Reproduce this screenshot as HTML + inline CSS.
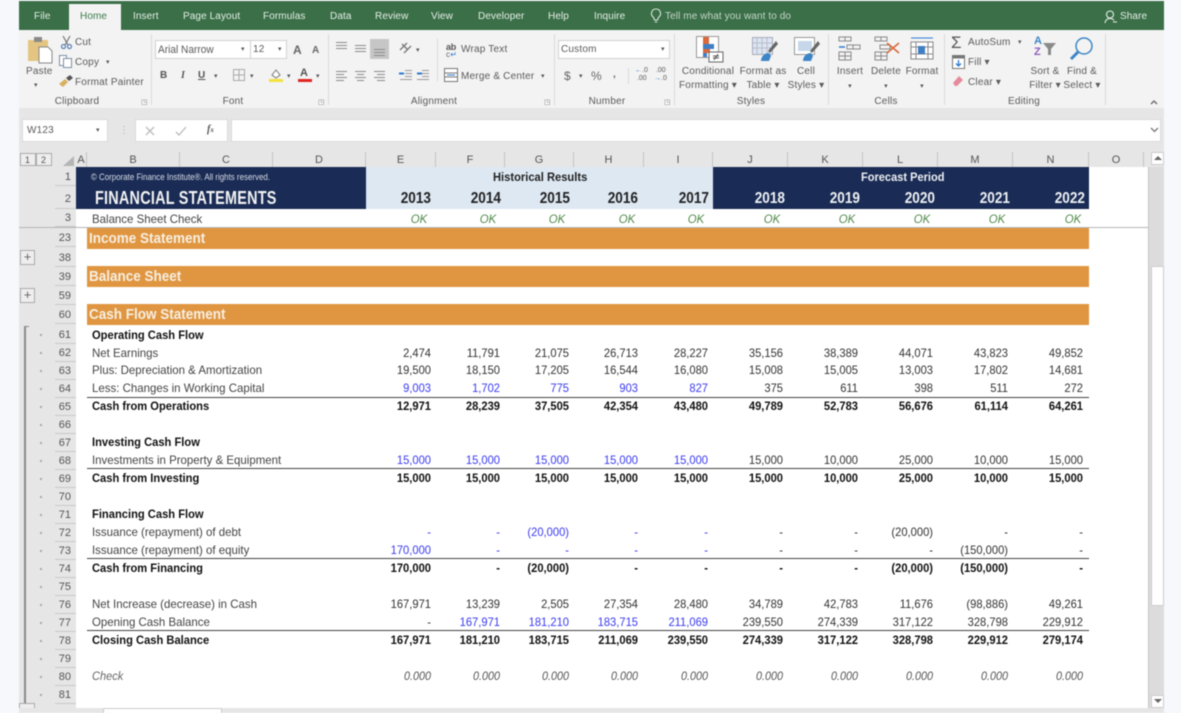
<!DOCTYPE html>
<html><head><meta charset="utf-8"><title>Excel</title>
<style>
*{box-sizing:border-box}
html,body{margin:0;padding:0;width:1181px;height:713px;overflow:hidden;background:#f6f8fb}
#w{position:absolute;left:0;top:0;width:1181px;height:713px;overflow:hidden;filter:blur(.4px);font-family:"Liberation Sans",sans-serif;color:#222}
.a,.t,.g{position:absolute;white-space:nowrap}
.t{font-size:10px;line-height:12px;color:#5a5a5a;letter-spacing:.2px}
.c{text-align:center;transform:translateX(-50%)}
.tab{position:absolute;top:11px;font-size:10px;line-height:12px;color:#e6efe8;white-space:nowrap;letter-spacing:.1px}
.sep{position:absolute;top:34px;width:1px;height:71px;background:#d9d9d9}
.r{position:absolute;left:0;width:1181px;height:18px;line-height:18px;font-size:12px;color:#333}
.r span{position:absolute;top:0;white-space:nowrap;text-align:right;width:80px;transform:scaleX(.93);transform-origin:right center}
.r .l{left:92px;width:280px;text-align:left;color:#444;transform:scaleX(.955);transform-origin:left center}
.b{font-weight:bold;color:#111}.b .l{color:#111;transform:scaleX(.93)}
.i{font-style:italic;color:#555}.i .l{color:#666;transform:scaleX(.92)}.i span{transform:scaleX(.9)}
.u{color:#3a3af0!important}
.E{left:351px}.F{left:420px}.G{left:489px}.H{left:558px}.I{left:628px}.J{left:703px}.K{left:778px}.L{left:853px}.M{left:928px}.N{left:1003px}
.n{position:absolute;left:55px;width:21px;text-align:right;padding-right:5px;font-size:11px;height:18px;line-height:18px;background:#e6e6e6;border-bottom:1px solid #c9c9c9;color:#555}
.d{position:absolute;left:40px;width:2px;height:2px;background:#aaa}
.h{position:absolute;top:152px;height:15px;line-height:16px;font-size:11px;text-align:center;color:#555;border-right:1px solid #c4c4c4}
.o{position:absolute;left:87px;width:1002px;height:21px;background:#e09640;color:#f7efe2;font-weight:bold;font-size:15px;line-height:21px;padding-left:2px}
.o span{display:inline-block;transform:scaleX(.9);transform-origin:left center;white-space:nowrap}
.y{position:absolute;top:189px;height:20px;line-height:20px;font-size:16px;font-weight:bold;text-align:right;width:80px;transform:scaleX(.85);transform-origin:right center}
.y.F,.y.G,.y.I{margin-left:1px}.y.J,.y.K,.y.L,.y.M,.y.N{margin-left:2px}
.ok{position:absolute;top:210px;font-size:12px;line-height:18px;font-style:italic;color:#4f8a4a;width:60px;text-align:center;transform:scaleX(.95)}
.ln{position:absolute;left:87px;width:1002px;height:1px;background:#444}
svg{position:absolute;overflow:visible}
</style></head><body><div id="w">

<!-- chrome -->
<div class="a" style="left:19px;top:1px;width:1145px;height:29px;background:#3a6f47"></div>
<div class="a" style="left:19px;top:30px;width:1145px;height:78px;background:#f3f3f3"></div>
<div class="a" style="left:19px;top:108px;width:1145px;height:44px;background:#e6e6e6"></div>
<div class="a" style="left:69px;top:4px;width:52px;height:27px;background:#f3f3f3"></div>
<div class="tab" style="left:34px">File</div>
<div class="tab" style="left:80px;color:#3a7a4c">Home</div>
<div class="tab" style="left:133px">Insert</div>
<div class="tab" style="left:183px">Page Layout</div>
<div class="tab" style="left:263px">Formulas</div>
<div class="tab" style="left:330px">Data</div>
<div class="tab" style="left:375px">Review</div>
<div class="tab" style="left:431px">View</div>
<div class="tab" style="left:478px">Developer</div>
<div class="tab" style="left:548px">Help</div>
<div class="tab" style="left:594px">Inquire</div>
<svg style="left:650px;top:8px" width="12" height="16" viewBox="0 0 12 16" fill="none" stroke="#dfe9e2" stroke-width="1.1"><path d="M6 1a4.5 4.5 0 0 0-2.6 8.2L4.500 12h3l1.100-2.800A4.500 4.500 0 0 0 6 1zM4.800 14h2.400"/></svg>
<div class="tab" style="left:665px;color:#c6d6ca">Tell me what you want to do</div>
<svg style="left:1104px;top:10px" width="13" height="14" viewBox="0 0 13 14" fill="none" stroke="#e6efe8" stroke-width="1.1"><circle cx="6" cy="4.500" r="3.500"/><path d="M1 13c.5-3 2.500-4.500 5-4.500s3.500 1 4 2M9 12h4"/></svg>
<div class="tab" style="left:1120px">Share</div>

<!-- ribbon separators -->
<div class="sep" style="left:151px"></div><div class="sep" style="left:328px"></div><div class="sep" style="left:554px"></div><div class="sep" style="left:674px"></div><div class="sep" style="left:828px"></div><div class="sep" style="left:944px"></div><div class="sep" style="left:1105px"></div>

<!-- clipboard -->
<svg style="left:27px;top:36px" width="26" height="28" viewBox="0 0 26 28"><rect x="1" y="4" width="20" height="21" fill="#e3c480"/><rect x="7" y="1" width="8" height="5" fill="#8a8a8a"/><path d="M12 11h9l4 4v12H12z" fill="#fff" stroke="#888"/></svg>
<div class="t" style="left:26px;top:66px">Paste</div>
<div class="t" style="left:34px;top:80px;font-size:7px">▾</div>
<svg style="left:60px;top:36px" width="13" height="13" viewBox="0 0 13 13" fill="none" stroke="#5a7fb0" stroke-width="1.2"><path d="M3 0l5 9M10 0L5 9" stroke="#777"/><circle cx="3.500" cy="10.500" r="2"/><circle cx="9.500" cy="10.500" r="2"/></svg>
<div class="t" style="left:75px;top:37px">Cut</div>
<svg style="left:59px;top:55px" width="13" height="13" viewBox="0 0 13 13" fill="#fff" stroke="#7a8fa8"><rect x=".5" y=".5" width="7" height="10"/><rect x="4.500" y="3.500" width="8" height="9"/></svg>
<div class="t" style="left:75px;top:57px">Copy</div>
<div class="t" style="left:106px;top:57px;font-size:7px">▾</div>
<svg style="left:59px;top:75px" width="14" height="12" viewBox="0 0 14 12"><path d="M0 9l6-5 3 3-5 5z" fill="#d8b060"/><path d="M7 3l4-3 3 3-4 3z" fill="#555"/></svg>
<div class="t" style="left:75px;top:77px">Format Painter</div>
<div class="t c" style="left:77px;top:96px">Clipboard</div>
<div class="t" style="left:141px;top:97px;font-size:7px;color:#888">◳</div>

<!-- font -->
<div class="a" style="left:155px;top:40px;width:96px;height:19px;background:#fff;border:1px solid #d0d0d0"></div>
<div class="t" style="left:158px;top:44px;letter-spacing:0;font-size:11px;transform:scaleX(.92);transform-origin:left">Arial Narrow</div>
<div class="t" style="left:241px;top:44px;font-size:7px">▾</div>
<div class="a" style="left:250px;top:40px;width:37px;height:19px;background:#fff;border:1px solid #d0d0d0"></div>
<div class="t" style="left:253px;top:44px">12</div>
<div class="t" style="left:278px;top:44px;font-size:7px">▾</div>
<div class="t" style="left:293px;top:43px;font-size:12px;line-height:14px;font-weight:bold;color:#666">A</div>
<div class="t" style="left:312px;top:45px;font-size:10px;font-weight:bold;color:#666">A</div>
<div class="t" style="left:160px;top:70px;font-weight:bold;color:#555">B</div>
<div class="t" style="left:181px;top:70px;font-style:italic;font-family:'Liberation Serif',serif;font-weight:bold;color:#555">I</div>
<div class="t" style="left:198px;top:70px;font-weight:bold;color:#555;text-decoration:underline">U</div>
<div class="t" style="left:214px;top:71px;font-size:7px">▾</div>
<svg style="left:233px;top:69px" width="12" height="12" viewBox="0 0 12 12" fill="none" stroke="#aaa"><path d="M.5.5h11v11H.5zM6 .5v11M.5 6h11"/></svg>
<div class="t" style="left:250px;top:71px;font-size:7px">▾</div>
<svg style="left:269px;top:68px" width="15" height="15" viewBox="0 0 15 15"><path d="M3 7l4-5 4 5-4 3z" fill="#fff" stroke="#777"/><rect y="11" width="14" height="3" fill="#f4e23e"/></svg>
<div class="t" style="left:287px;top:71px;font-size:7px">▾</div>
<div class="t" style="left:300px;top:67px;font-size:11px;font-weight:bold;color:#555">A</div>
<div class="a" style="left:298px;top:79px;width:14px;height:3px;background:#e02525"></div>
<div class="t" style="left:316px;top:71px;font-size:7px">▾</div>
<div class="t c" style="left:233px;top:96px">Font</div>
<div class="t" style="left:318px;top:97px;font-size:7px;color:#888">◳</div>

<!-- alignment -->
<div class="a" style="left:370px;top:39px;width:19px;height:20px;background:#c6c6c6"></div>
<svg style="left:335px;top:41px" width="52" height="14" viewBox="0 0 52 14" stroke="#8a8a8a" fill="none"><path d="M1 1.500h11M1 4.500h11M1 7.500h11M20 4.500h11M20 7.500h11M20 10.500h11M39 8.500h11M39 11.500h11M39 14.500h11"/></svg>
<svg style="left:335px;top:70px" width="52" height="12" viewBox="0 0 52 12" stroke="#8a8a8a" fill="none"><path d="M1 1.500h11M1 4.500h8M1 7.500h11M1 10.500h8M20 1.500h11M22 4.500h7M20 7.500h11M22 10.500h7M39 1.500h11M42 4.500h8M39 7.500h11M42 10.500h8"/></svg>
<svg style="left:399px;top:41px" width="13" height="14" viewBox="0 0 13 14" fill="none" stroke="#777" stroke-width="1.300"><path d="M1 9l7-7M3 3l6 6M5 12l7-7"/></svg>
<div class="t" style="left:416px;top:45px;font-size:7px">▾</div>
<svg style="left:399px;top:69px" width="33" height="12" viewBox="0 0 33 12" fill="none" stroke="#999"><path d="M6 1.500h7M6 4.500h7M6 7.500h7M1 10.500h12M23 1.500h7M23 4.500h7M23 7.500h7M18 10.500h12"/><path d="M0 4.500h5M18 4.500h5" stroke="#2d7ad0" stroke-width="2"/></svg>
<div class="a" style="left:437px;top:39px;width:1px;height:42px;background:#d9d9d9"></div>
<div class="t" style="left:446px;top:42px;font-size:9px;line-height:10px;font-weight:bold;color:#555;letter-spacing:-.3px">ab</div>
<div class="t" style="left:446px;top:50px;font-size:8px;line-height:10px;color:#666">c<span style="color:#2d7ad0">↵</span></div>
<div class="t" style="left:461px;top:44px">Wrap Text</div>
<svg style="left:444px;top:68px" width="14" height="14" viewBox="0 0 14 14" fill="#fff" stroke="#777"><rect x=".5" y=".5" width="13" height="13"/><path d="M.5 5h13M.5 9h13" /><path d="M3 7h8" stroke="#2d7ad0"/></svg>
<div class="t" style="left:461px;top:71px">Merge &amp; Center</div>
<div class="t" style="left:541px;top:71px;font-size:7px">▾</div>
<div class="t c" style="left:434px;top:96px">Alignment</div>
<div class="t" style="left:544px;top:97px;font-size:7px;color:#888">◳</div>

<!-- number -->
<div class="a" style="left:558px;top:40px;width:112px;height:19px;background:#fff;border:1px solid #d0d0d0"></div>
<div class="t" style="left:561px;top:44px">Custom</div>
<div class="t" style="left:661px;top:44px;font-size:7px">▾</div>
<div class="t" style="left:564px;top:69px;font-size:12px;line-height:14px;color:#666">$</div>
<div class="t" style="left:579px;top:71px;font-size:7px">▾</div>
<div class="t" style="left:591px;top:69px;font-size:12px;line-height:14px;color:#666">%</div>
<div class="t" style="left:613px;top:69px;font-weight:bold;color:#666">,</div>
<div class="a" style="left:628px;top:68px;width:1px;height:16px;background:#d9d9d9"></div>
<div class="t" style="left:635px;top:67px;font-size:7px;line-height:8px;letter-spacing:0"><span style="color:#2d7ad0">←</span>.0<br>&nbsp;.00</div>
<div class="t" style="left:654px;top:67px;font-size:7px;line-height:8px;letter-spacing:0">&nbsp;.00<br><span style="color:#2d7ad0">→</span>.0</div>
<div class="t c" style="left:607px;top:96px">Number</div>
<div class="t" style="left:664px;top:97px;font-size:7px;color:#888">◳</div>

<!-- styles -->
<svg style="left:696px;top:36px" width="28" height="27" viewBox="0 0 28 27"><rect x=".5" y=".5" width="22" height="21" fill="#fff" stroke="#999"/><rect x="7" y="1" width="6" height="7" fill="#d9693a"/><rect x="7" y="8" width="11" height="5" fill="#3f7fc6"/><rect x="7" y="13" width="7" height="4" fill="#d9693a"/><rect x="7" y="17" width="4" height="4" fill="#3f7fc6"/><rect x="13" y="16" width="14" height="10" fill="#fff" stroke="#666"/><path d="M17 20h6M17 22h6M22 18l-4 6" stroke="#555" fill="none"/></svg>
<svg style="left:752px;top:37px" width="26" height="26" viewBox="0 0 26 26"><rect x=".5" y=".5" width="20" height="17" fill="#dce6f2" stroke="#aab"/><path d="M5 1v16M10 1v16M15 1v16M1 6h19M1 11h19" stroke="#bbc" fill="none"/><path d="M24 4l-8 10 2 2 8-9z" fill="#666"/><path d="M9 24c0-5 4-8 8-8l2 3-2 5z" fill="#3d85c6"/></svg>
<svg style="left:794px;top:37px" width="26" height="26" viewBox="0 0 26 26"><rect x=".5" y=".5" width="20" height="17" fill="#fff" stroke="#999"/><rect x="4" y="4" width="14" height="10" fill="#c7d7ea"/><path d="M24 4l-8 10 2 2 8-9z" fill="#666"/><path d="M9 24c0-5 4-8 8-8l2 3-2 5z" fill="#3d85c6"/></svg>
<div class="t c" style="left:708px;top:66px">Conditional</div>
<div class="t c" style="left:708px;top:80px">Formatting ▾</div>
<div class="t c" style="left:763px;top:66px">Format as</div>
<div class="t c" style="left:763px;top:80px">Table ▾</div>
<div class="t c" style="left:806px;top:66px">Cell</div>
<div class="t c" style="left:806px;top:80px">Styles ▾</div>
<div class="t c" style="left:751px;top:96px">Styles</div>

<!-- cells -->
<svg style="left:838px;top:36px" width="24" height="25" viewBox="0 0 24 25" fill="none" stroke="#888"><path d="M1 1h12v4H1zM7 1v4M9 9h13v4H9zM15 9v4M1 16h12v8H1zM7 16v8M1 20h12"/><path d="M1 11h6" stroke="#2d7ad0" stroke-width="1.500"/></svg>
<svg style="left:874px;top:36px" width="26" height="25" viewBox="0 0 26 25" fill="none" stroke="#888"><path d="M1 1h12v4H1zM7 1v4M6 9h10v4H6zM1 16h12v8H1zM7 16v8M1 20h12"/><path d="M13 7l12 10M25 7L13 17" stroke="#d9693a" stroke-width="1.600"/></svg>
<svg style="left:910px;top:35px" width="25" height="27" viewBox="0 0 25 27" fill="none" stroke="#888"><path d="M1 3h22" stroke="#2d7ad0"/><rect x="1" y="7" width="22" height="17" fill="#fff"/><path d="M6 7v17M18 7v17M1 12h22M1 19h22"/><rect x="8" y="11" width="7" height="8" fill="#3f7fc6" stroke="none"/></svg>
<div class="t c" style="left:850px;top:66px">Insert</div><div class="t c" style="left:850px;top:81px;font-size:7px">▾</div>
<div class="t c" style="left:886px;top:66px">Delete</div><div class="t c" style="left:886px;top:81px;font-size:7px">▾</div>
<div class="t c" style="left:922px;top:66px">Format</div><div class="t c" style="left:922px;top:81px;font-size:7px">▾</div>
<div class="t c" style="left:886px;top:96px">Cells</div>

<!-- editing -->
<div class="t" style="left:951px;top:34px;font-size:17px;line-height:18px;color:#555">Σ</div>
<div class="t" style="left:968px;top:37px">AutoSum</div>
<div class="t" style="left:1018px;top:37px;font-size:7px">▾</div>
<svg style="left:952px;top:55px" width="13" height="14" viewBox="0 0 13 14"><rect x=".5" y=".5" width="12" height="13" fill="#fff" stroke="#777"/><rect x=".5" y=".5" width="12" height="3" fill="#777"/><path d="M6.500 5v6M4 8.500l2.500 2.500L9 8.500" stroke="#2d7ad0" fill="none" stroke-width="1.300"/></svg>
<div class="t" style="left:968px;top:57px">Fill ▾</div>
<svg style="left:952px;top:75px" width="12" height="12" viewBox="0 0 12 12"><path d="M1 8l6-7 4 4-6 6H3z" fill="#e58a9c"/></svg>
<div class="t" style="left:968px;top:77px">Clear ▾</div>
<div class="t" style="left:1034px;top:35px;font-size:11px;line-height:12px;font-weight:bold;color:#3d85c6">A</div>
<div class="t" style="left:1034px;top:46px;font-size:11px;line-height:12px;font-weight:bold;color:#8e5fc0">Z</div>
<svg style="left:1043px;top:42px" width="14" height="14" viewBox="0 0 14 14"><path d="M0 1h13L8 7v6H5V7z" fill="#8a8a8a"/></svg>
<svg style="left:1069px;top:36px" width="25" height="25" viewBox="0 0 25 25" fill="none" stroke="#3d85c6"><circle cx="15" cy="10" r="8" stroke-width="1.500"/><path d="M9 16l-7 7" stroke-width="3"/></svg>
<div class="t c" style="left:1045px;top:66px">Sort &amp;</div>
<div class="t c" style="left:1045px;top:80px">Filter ▾</div>
<div class="t c" style="left:1082px;top:66px">Find &amp;</div>
<div class="t c" style="left:1082px;top:80px">Select ▾</div>
<div class="t c" style="left:1024px;top:96px">Editing</div>
<svg style="left:1149px;top:99px" width="10" height="6" viewBox="0 0 10 6" fill="none" stroke="#666" stroke-width="1.300"><path d="M2 5l3-3 3 3"/></svg>

<!-- formula bar -->
<div class="a" style="left:22px;top:119px;width:86px;height:23px;background:#fff;border:1px solid #d9d9d9"></div>
<div class="t" style="left:27px;top:125px">W123</div>
<div class="t" style="left:96px;top:125px;font-size:7px">▾</div>
<div class="t" style="left:119px;top:125px;color:#aaa">⋮</div>
<div class="a" style="left:135px;top:119px;width:93px;height:23px;background:#fff;border:1px solid #d9d9d9"></div>
<svg style="left:145px;top:125px" width="42" height="12" viewBox="0 0 42 12" fill="none" stroke="#bbb" stroke-width="1.300"><path d="M1 2l8 8M9 2l-8 8M31 7l3 3 7-8"/></svg>
<div class="t" style="left:207px;top:124px;font-family:'Liberation Serif',serif;font-style:italic;font-weight:bold;color:#555;letter-spacing:0">f<span style="font-size:7px">x</span></div>
<div class="a" style="left:231px;top:119px;width:930px;height:23px;background:#fff;border:1px solid #d9d9d9"></div>
<svg style="left:1150px;top:127px" width="9" height="6" viewBox="0 0 9 6" fill="none" stroke="#777" stroke-width="1.300"><path d="M1 1l3.500 3.500L8 1"/></svg>

<!-- grid area -->
<div class="a" style="left:19px;top:150px;width:1145px;height:563px;background:#e6e6e6"></div>
<div class="a" style="left:76px;top:167px;width:1072px;height:541px;background:#fff"></div>
<div class="a" style="left:1148px;top:167px;width:1px;height:541px;background:#c6c6c6"></div>
<div class="a" style="left:20px;top:153px;width:16px;height:13px;border:1px solid #aaa;background:#eee;font-size:9px;line-height:12px;color:#555;padding-left:4px">1</div>
<div class="a" style="left:36px;top:153px;width:16px;height:13px;border:1px solid #aaa;background:#eee;font-size:9px;line-height:12px;color:#555;padding-left:4px">2</div>
<svg style="left:63px;top:156px" width="11" height="10" viewBox="0 0 11 10"><path d="M11 0v10H0z" fill="#b5b5b5"/></svg>

<div class="h" style="left:76px;width:11px">A</div>
<div class="h" style="left:87px;width:93px">B</div>
<div class="h" style="left:180px;width:93px">C</div>
<div class="h" style="left:273px;width:93px">D</div>
<div class="h" style="left:366px;width:70px">E</div>
<div class="h" style="left:436px;width:69px">F</div>
<div class="h" style="left:505px;width:69px">G</div>
<div class="h" style="left:574px;width:70px">H</div>
<div class="h" style="left:644px;width:69px">I</div>
<div class="h" style="left:713px;width:75px">J</div>
<div class="h" style="left:788px;width:75px">K</div>
<div class="h" style="left:863px;width:75px">L</div>
<div class="h" style="left:938px;width:75px">M</div>
<div class="h" style="left:1013px;width:76px">N</div>
<div class="h" style="left:1089px;width:55px">O</div>

<!-- title band -->
<div class="a" style="left:76px;top:167px;width:290px;height:42px;background:#1a2c55"></div>
<div class="a" style="left:366px;top:167px;width:347px;height:42px;background:#dde8f3"></div>
<div class="a" style="left:713px;top:167px;width:376px;height:42px;background:#1a2c55"></div>
<div class="a" style="left:91px;top:172px;font-size:9px;line-height:11px;color:#d8dce6;transform:scaleX(.88);transform-origin:left">© Corporate Finance Institute®. All rights reserved.</div>
<div class="a" style="left:95px;top:188px;font-size:18px;line-height:21px;font-weight:bold;color:#f2f2f2;letter-spacing:.3px;transform:scaleX(.8);transform-origin:left">FINANCIAL STATEMENTS</div>
<div class="a" style="left:493px;top:169px;font-size:12px;line-height:16px;font-weight:bold;color:#222;transform:scaleX(.93);transform-origin:left">Historical Results</div>
<div class="a" style="left:861px;top:169px;font-size:12px;line-height:16px;font-weight:bold;color:#eef0f4;transform:scaleX(.92);transform-origin:left">Forecast Period</div>
<div class="y E" style="color:#222">2013</div><div class="y F" style="color:#222">2014</div><div class="y G" style="color:#222">2015</div><div class="y H" style="color:#222">2016</div><div class="y I" style="color:#222">2017</div>
<div class="y J" style="color:#eef0f4">2018</div><div class="y K" style="color:#eef0f4">2019</div><div class="y L" style="color:#eef0f4">2020</div><div class="y M" style="color:#eef0f4">2021</div><div class="y N" style="color:#eef0f4">2022</div>

<div class="r" style="top:210px"><span class="l">Balance Sheet Check</span></div>
<div class="ok" style="left:389px">OK</div><div class="ok" style="left:458px">OK</div><div class="ok" style="left:527px">OK</div><div class="ok" style="left:597px">OK</div><div class="ok" style="left:666px">OK</div><div class="ok" style="left:742px">OK</div><div class="ok" style="left:817px">OK</div><div class="ok" style="left:892px">OK</div><div class="ok" style="left:967px">OK</div><div class="ok" style="left:1043px">OK</div>
<div class="a" style="left:19px;top:227px;width:1129px;height:1px;background:#b5b5b5"></div>

<div class="o" style="top:228px"><span>Income Statement</span></div>
<div class="o" style="top:266px"><span>Balance Sheet</span></div>
<div class="o" style="top:304px"><span>Cash Flow Statement</span></div>

<!-- row numbers -->
<div class="n" style="top:168px">1</div><div class="n" style="top:187px;height:22px;line-height:24px">2</div><div class="n" style="top:209px">3</div>
<div class="n" style="top:229px">23</div><div class="n" style="top:249px">38</div><div class="n" style="top:268px">39</div><div class="n" style="top:287px">59</div><div class="n" style="top:306px">60</div>
<div class="n" style="top:326px">61</div><div class="n" style="top:344px">62</div><div class="n" style="top:362px">63</div><div class="n" style="top:380px">64</div><div class="n" style="top:398px">65</div><div class="n" style="top:416px">66</div><div class="n" style="top:434px">67</div><div class="n" style="top:452px">68</div><div class="n" style="top:470px">69</div><div class="n" style="top:488px">70</div><div class="n" style="top:506px">71</div><div class="n" style="top:524px">72</div><div class="n" style="top:542px">73</div><div class="n" style="top:560px">74</div><div class="n" style="top:578px">75</div><div class="n" style="top:596px">76</div><div class="n" style="top:614px">77</div><div class="n" style="top:632px">78</div><div class="n" style="top:650px">79</div><div class="n" style="top:668px">80</div><div class="n" style="top:686px">81</div>

<!-- outline -->
<div class="a" style="left:20px;top:250px;width:15px;height:15px;border:1px solid #aaa;background:#eee;font-size:13px;line-height:12px;text-align:center;color:#666">+</div>
<div class="a" style="left:20px;top:288px;width:15px;height:15px;border:1px solid #aaa;background:#eee;font-size:13px;line-height:12px;text-align:center;color:#666">+</div>
<div class="a" style="left:24px;top:326px;width:5px;height:378px;border-left:2px solid #8a8a8a;border-top:1px solid #8a8a8a"></div>
<div class="a" style="left:19px;top:703px;width:16px;height:6px;border:1px solid #aaa;background:#eee"></div>
<div class="d" style="top:334px"></div><div class="d" style="top:352px"></div><div class="d" style="top:370px"></div><div class="d" style="top:388px"></div><div class="d" style="top:406px"></div><div class="d" style="top:424px"></div><div class="d" style="top:442px"></div><div class="d" style="top:460px"></div><div class="d" style="top:478px"></div><div class="d" style="top:496px"></div><div class="d" style="top:514px"></div><div class="d" style="top:532px"></div><div class="d" style="top:550px"></div><div class="d" style="top:568px"></div><div class="d" style="top:586px"></div><div class="d" style="top:604px"></div><div class="d" style="top:622px"></div><div class="d" style="top:640px"></div><div class="d" style="top:658px"></div><div class="d" style="top:676px"></div><div class="d" style="top:694px"></div>

<!-- data -->
<div class="r b" style="top:326px"><span class="l">Operating Cash Flow</span></div>
<div class="r" style="top:344px"><span class="l">Net Earnings</span><span class="E">2,474</span><span class="F">11,791</span><span class="G">21,075</span><span class="H">26,713</span><span class="I">28,227</span><span class="J">35,156</span><span class="K">38,389</span><span class="L">44,071</span><span class="M">43,823</span><span class="N">49,852</span></div>
<div class="r" style="top:361px"><span class="l">Plus: Depreciation &amp; Amortization</span><span class="E">19,500</span><span class="F">18,150</span><span class="G">17,205</span><span class="H">16,544</span><span class="I">16,080</span><span class="J">15,008</span><span class="K">15,005</span><span class="L">13,003</span><span class="M">17,802</span><span class="N">14,681</span></div>
<div class="r" style="top:379px"><span class="l">Less: Changes in Working Capital</span><span class="E u">9,003</span><span class="F u">1,702</span><span class="G u">775</span><span class="H u">903</span><span class="I u">827</span><span class="J">375</span><span class="K">611</span><span class="L">398</span><span class="M">511</span><span class="N">272</span></div>
<div class="ln" style="top:397px"></div>
<div class="r b" style="top:397px"><span class="l">Cash from Operations</span><span class="E">12,971</span><span class="F">28,239</span><span class="G">37,505</span><span class="H">42,354</span><span class="I">43,480</span><span class="J">49,789</span><span class="K">52,783</span><span class="L">56,676</span><span class="M">61,114</span><span class="N">64,261</span></div>
<div class="r b" style="top:433px"><span class="l">Investing Cash Flow</span></div>
<div class="r" style="top:451px"><span class="l">Investments in Property &amp; Equipment</span><span class="E u">15,000</span><span class="F u">15,000</span><span class="G u">15,000</span><span class="H u">15,000</span><span class="I u">15,000</span><span class="J">15,000</span><span class="K">10,000</span><span class="L">25,000</span><span class="M">10,000</span><span class="N">15,000</span></div>
<div class="ln" style="top:468px"></div>
<div class="r b" style="top:469px"><span class="l">Cash from Investing</span><span class="E">15,000</span><span class="F">15,000</span><span class="G">15,000</span><span class="H">15,000</span><span class="I">15,000</span><span class="J">15,000</span><span class="K">10,000</span><span class="L">25,000</span><span class="M">10,000</span><span class="N">15,000</span></div>
<div class="r b" style="top:505px"><span class="l">Financing Cash Flow</span></div>
<div class="r" style="top:523px"><span class="l">Issuance (repayment) of debt</span><span class="E u">-</span><span class="F u">-</span><span class="G u">(20,000)</span><span class="H u">-</span><span class="I u">-</span><span class="J">-</span><span class="K">-</span><span class="L">(20,000)</span><span class="M">-</span><span class="N">-</span></div>
<div class="r" style="top:541px"><span class="l">Issuance (repayment) of equity</span><span class="E u">170,000</span><span class="F u">-</span><span class="G u">-</span><span class="H u">-</span><span class="I u">-</span><span class="J">-</span><span class="K">-</span><span class="L">-</span><span class="M">(150,000)</span><span class="N">-</span></div>
<div class="ln" style="top:558px"></div>
<div class="r b" style="top:559px"><span class="l">Cash from Financing</span><span class="E">170,000</span><span class="F">-</span><span class="G">(20,000)</span><span class="H">-</span><span class="I">-</span><span class="J">-</span><span class="K">-</span><span class="L">(20,000)</span><span class="M">(150,000)</span><span class="N">-</span></div>
<div class="r" style="top:595px"><span class="l">Net Increase (decrease) in Cash</span><span class="E">167,971</span><span class="F">13,239</span><span class="G">2,505</span><span class="H">27,354</span><span class="I">28,480</span><span class="J">34,789</span><span class="K">42,783</span><span class="L">11,676</span><span class="M">(98,886)</span><span class="N">49,261</span></div>
<div class="r" style="top:613px"><span class="l">Opening Cash Balance</span><span class="E">-</span><span class="F u">167,971</span><span class="G u">181,210</span><span class="H u">183,715</span><span class="I u">211,069</span><span class="J">239,550</span><span class="K">274,339</span><span class="L">317,122</span><span class="M">328,798</span><span class="N">229,912</span></div>
<div class="ln" style="top:630px"></div>
<div class="r b" style="top:631px"><span class="l">Closing Cash Balance</span><span class="E">167,971</span><span class="F">181,210</span><span class="G">183,715</span><span class="H">211,069</span><span class="I">239,550</span><span class="J">274,339</span><span class="K">317,122</span><span class="L">328,798</span><span class="M">229,912</span><span class="N">279,174</span></div>
<div class="r i" style="top:667px"><span class="l">Check</span><span class="E">0.000</span><span class="F">0.000</span><span class="G">0.000</span><span class="H">0.000</span><span class="I">0.000</span><span class="J">0.000</span><span class="K">0.000</span><span class="L">0.000</span><span class="M">0.000</span><span class="N">0.000</span></div>

<!-- scrollbar -->
<div class="a" style="left:1149px;top:167px;width:15px;height:541px;background:#dcdcdc"></div>
<div class="a" style="left:1151px;top:152px;width:13px;height:13px;background:#fff;border:1px solid #ccc"></div>
<div class="a" style="left:1154px;top:156px;width:0;height:0;border:4px solid transparent;border-bottom:4px solid #666;border-top:0"></div>
<div class="a" style="left:1151px;top:266px;width:13px;height:340px;background:#fff;border:1px solid #ccc"></div>
<div class="a" style="left:1151px;top:695px;width:13px;height:13px;background:#fff;border:1px solid #ccc"></div>
<div class="a" style="left:1154px;top:699px;width:0;height:0;border:4px solid transparent;border-top:4px solid #666;border-bottom:0"></div>

<!-- bottom -->
<div class="a" style="left:19px;top:708px;width:1145px;height:5px;background:#e6e6e6"></div>
<div class="a" style="left:103px;top:708px;width:119px;height:5px;background:#fff;border:1px solid #ccc;border-bottom:0"></div>
</div></body></html>
